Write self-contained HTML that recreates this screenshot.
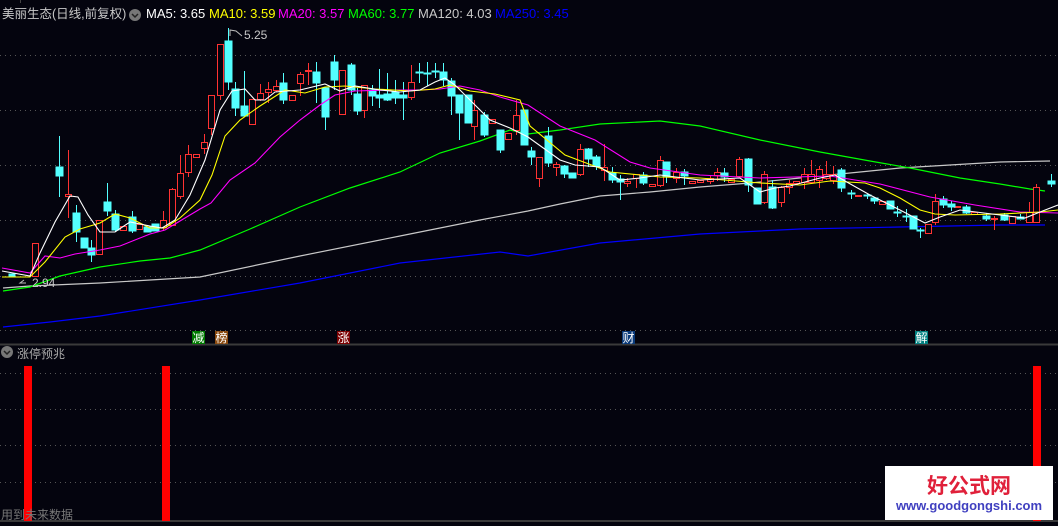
<!DOCTYPE html>
<html><head><meta charset="utf-8"><style>
html,body{margin:0;padding:0;background:#04040e;}
body{width:1058px;height:526px;overflow:hidden;position:relative;font-family:"Liberation Sans","Noto Sans CJK SC",sans-serif;}
.hd{position:absolute;top:6px;font-size:13px;color:#c8c8c8;white-space:nowrap;line-height:16px}
.sig{position:absolute;top:331px;width:13px;height:13px;font-size:12px;line-height:13px;color:#fff;text-align:center;font-family:"Noto Sans CJK SC",sans-serif}
.logo{position:absolute;left:885px;top:466px;width:168px;height:54px;background:#fff;text-align:center}
</style></head><body>
<svg width="1058" height="526" style="position:absolute;left:0;top:0">
<g stroke="#555" stroke-width="1" stroke-dasharray="1,4">
<line x1="0" y1="55.5" x2="1058" y2="55.5"/><line x1="0" y1="110.5" x2="1058" y2="110.5"/><line x1="0" y1="165.5" x2="1058" y2="165.5"/><line x1="0" y1="220.5" x2="1058" y2="220.5"/><line x1="0" y1="276.5" x2="1058" y2="276.5"/><line x1="0" y1="330.5" x2="1058" y2="330.5"/>
<line x1="0" y1="373.5" x2="1058" y2="373.5"/><line x1="0" y1="409.5" x2="1058" y2="409.5"/><line x1="0" y1="445.5" x2="1058" y2="445.5"/><line x1="0" y1="482.5" x2="1058" y2="482.5"/>
</g>
<line x1="0" y1="344.5" x2="1058" y2="344.5" stroke="#3a3a3a" stroke-width="2"/>
<line x1="0" y1="521" x2="1058" y2="521" stroke="#3a3a3a" stroke-width="2"/>
<g fill="none" stroke-width="1.2">
<polyline stroke="#0000ff" points="3,327 50,322 100,316 200,300 300,283 400,263 500,252 528,256 600,243 700,234 800,229 900,227 1000,225 1045,225"/>
<polyline stroke="#c8c8c8" points="3,288 30,286 100,283 150,280 200,277 300,256 400,236 480,220 528,211 560,204 600,196 650,192 700,187 750,183 800,178 850,173 900,168 950,165 1000,162 1050,161"/>
<polyline stroke="#00ff00" points="3,291 30,287 60,276 100,267 140,261 170,258 200,250 250,229 300,207 350,188 400,172 440,153 480,141 510,130 528,134 560,130 600,124 660,121 700,126 760,140 820,152 870,161 910,168 960,178 1000,184 1030,189 1045,191"/>
</g>
<g stroke="#ff3232" stroke-width="1">
<g fill="#04040e">
<line x1="35.5" y1="243" x2="35.5" y2="277"/><rect x="32.5" y="243.5" width="6" height="33"/>
<line x1="68.5" y1="150" x2="68.5" y2="218"/><rect x="65.5" y="194.5" width="6" height="2"/>
<rect x="96.5" y="220.5" width="6" height="34"/>
<rect x="120.5" y="226.5" width="6" height="4"/><rect x="136.5" y="224.5" width="6" height="5"/>
<line x1="163.5" y1="211" x2="163.5" y2="231"/><rect x="160.5" y="220.5" width="6" height="7"/>
<line x1="172.5" y1="188" x2="172.5" y2="226"/><rect x="169.5" y="189.5" width="6" height="36"/>
<line x1="180.5" y1="155" x2="180.5" y2="199"/><rect x="177.5" y="173.5" width="6" height="23"/>
<line x1="188.5" y1="145" x2="188.5" y2="177"/><rect x="185.5" y="154.5" width="6" height="18"/>
<rect x="193.5" y="154.5" width="6" height="3"/>
<line x1="204.5" y1="134" x2="204.5" y2="154"/><rect x="201.5" y="142.5" width="6" height="6"/>
<line x1="211.5" y1="95" x2="211.5" y2="135"/><rect x="208.5" y="95.5" width="6" height="33"/>
<line x1="220.5" y1="44" x2="220.5" y2="100"/><rect x="217.5" y="44.5" width="6" height="51"/>
<rect x="249.5" y="99.5" width="6" height="25"/>
<line x1="260.5" y1="84" x2="260.5" y2="101"/><rect x="257.5" y="93.5" width="6" height="6"/>
<line x1="268.5" y1="82" x2="268.5" y2="103"/><rect x="265.5" y="89.5" width="6" height="3"/>
<line x1="276.5" y1="80" x2="276.5" y2="92"/><rect x="273.5" y="86.5" width="6" height="4"/>
<rect x="289.5" y="95.5" width="6" height="5"/>
<line x1="300.5" y1="72" x2="300.5" y2="96"/><rect x="297.5" y="74.5" width="6" height="9"/>
<line x1="308.5" y1="63" x2="308.5" y2="85"/><rect x="305.5" y="70.5" width="6" height="1"/>
<rect x="339.5" y="70.5" width="6" height="44"/>
<line x1="364.5" y1="85" x2="364.5" y2="118"/><rect x="361.5" y="85.5" width="6" height="25"/>
<line x1="411.5" y1="65" x2="411.5" y2="100"/><rect x="408.5" y="82.5" width="6" height="15"/>
<line x1="474.5" y1="100" x2="474.5" y2="140"/><rect x="471.5" y="110.5" width="6" height="16"/>
<rect x="489.5" y="119.5" width="6" height="4"/><rect x="505.5" y="133.5" width="6" height="6"/>
<line x1="516.5" y1="100" x2="516.5" y2="135"/><rect x="513.5" y="115.5" width="6" height="15"/>
<line x1="539.5" y1="157" x2="539.5" y2="187"/><rect x="536.5" y="157.5" width="6" height="21"/>
<line x1="556.5" y1="162" x2="556.5" y2="176"/><rect x="553.5" y="164.5" width="6" height="3"/>
<line x1="580.5" y1="144" x2="580.5" y2="176"/><rect x="577.5" y="149.5" width="6" height="25"/>
<line x1="604.5" y1="144" x2="604.5" y2="181"/><rect x="601.5" y="167.5" width="6" height="3"/>
<line x1="627.5" y1="178" x2="627.5" y2="187"/><rect x="624.5" y="181.5" width="6" height="2"/>
<line x1="636.5" y1="174" x2="636.5" y2="188"/><rect x="633.5" y="174.5" width="6" height="4"/>
<rect x="649.5" y="184.5" width="6" height="2"/>
<line x1="660.5" y1="156" x2="660.5" y2="187"/><rect x="657.5" y="160.5" width="6" height="25"/>
<line x1="676.5" y1="168" x2="676.5" y2="183"/><rect x="673.5" y="172.5" width="6" height="6"/>
<rect x="689.5" y="181.5" width="6" height="2"/><rect x="697.5" y="180.5" width="6" height="2"/>
<line x1="710.5" y1="176" x2="710.5" y2="184"/><rect x="707.5" y="178.5" width="6" height="3"/>
<line x1="717.5" y1="168" x2="717.5" y2="181"/><rect x="714.5" y="172.5" width="6" height="3"/>
<rect x="728.5" y="179.5" width="6" height="3"/>
<line x1="739.5" y1="157" x2="739.5" y2="177"/><rect x="736.5" y="159.5" width="6" height="17"/>
<line x1="764.5" y1="171" x2="764.5" y2="204"/><rect x="761.5" y="174.5" width="6" height="28"/>
<line x1="781.5" y1="186" x2="781.5" y2="207"/><rect x="778.5" y="187.5" width="6" height="15"/>
<line x1="789.5" y1="180" x2="789.5" y2="194"/><rect x="786.5" y="183.5" width="6" height="4"/>
<rect x="793.5" y="181.5" width="6" height="2"/>
<line x1="804.5" y1="168" x2="804.5" y2="189"/><rect x="801.5" y="174.5" width="6" height="8"/>
<line x1="811.5" y1="160" x2="811.5" y2="181"/><rect x="808.5" y="174.5" width="6" height="8"/>
<line x1="819.5" y1="166" x2="819.5" y2="188"/><rect x="816.5" y="169.5" width="6" height="11"/>
<line x1="826.5" y1="161" x2="826.5" y2="180"/><rect x="823.5" y="174.5" width="6" height="4"/>
<line x1="833.5" y1="166" x2="833.5" y2="184"/><rect x="830.5" y="174.5" width="6" height="6"/>
<rect x="855.5" y="195.5" width="6" height="1"/><rect x="879.5" y="201.5" width="6" height="3"/>
<rect x="925.5" y="224.5" width="6" height="9"/>
<line x1="935.5" y1="194" x2="935.5" y2="225"/><rect x="932.5" y="201.5" width="6" height="21"/>
<rect x="954.5" y="206.5" width="6" height="1"/><rect x="971.5" y="212.5" width="6" height="2"/>
<line x1="994.5" y1="216" x2="994.5" y2="230"/><rect x="991.5" y="218.5" width="6" height="1"/>
<rect x="1009.5" y="216.5" width="6" height="7"/>
<line x1="1029.5" y1="202" x2="1029.5" y2="223"/><rect x="1026.5" y="212.5" width="6" height="10"/>
<line x1="1036.5" y1="184" x2="1036.5" y2="222"/><rect x="1033.5" y="187.5" width="6" height="35"/>
</g></g>
<g stroke="#54ffff" fill="#54ffff" stroke-width="1">
<rect x="9" y="274" width="6" height="3"/>
<line x1="59.5" y1="136" x2="59.5" y2="197"/><rect x="56" y="167" width="7" height="9"/>
<line x1="76.5" y1="205" x2="76.5" y2="242"/><rect x="73" y="213" width="7" height="19"/>
<rect x="81" y="238" width="7" height="10"/>
<line x1="91.5" y1="240" x2="91.5" y2="262"/><rect x="88" y="248" width="7" height="7"/>
<line x1="107.5" y1="183" x2="107.5" y2="216"/><rect x="104" y="202" width="7" height="9"/>
<line x1="115.5" y1="210" x2="115.5" y2="232"/><rect x="112" y="214" width="7" height="16"/>
<line x1="132.5" y1="211" x2="132.5" y2="233"/><rect x="129" y="217" width="7" height="14"/>
<rect x="144" y="227" width="7" height="5"/><rect x="152" y="224" width="7" height="7"/>
<line x1="228.5" y1="28" x2="228.5" y2="90"/><rect x="225" y="41" width="7" height="41"/>
<line x1="235.5" y1="82" x2="235.5" y2="116"/><rect x="232" y="89" width="7" height="19"/>
<line x1="244.5" y1="71" x2="244.5" y2="116"/><rect x="241" y="106" width="7" height="10"/>
<line x1="283.5" y1="73" x2="283.5" y2="104"/><rect x="280" y="83" width="7" height="17"/>
<line x1="316.5" y1="62" x2="316.5" y2="103"/><rect x="313" y="72" width="7" height="11"/>
<line x1="325.5" y1="88" x2="325.5" y2="130"/><rect x="322" y="88" width="7" height="29"/>
<line x1="334.5" y1="55" x2="334.5" y2="90"/><rect x="331" y="62" width="7" height="18"/>
<line x1="351.5" y1="63" x2="351.5" y2="95"/><rect x="348" y="65" width="7" height="25"/>
<line x1="357.5" y1="88" x2="357.5" y2="115"/><rect x="354" y="94" width="7" height="17"/>
<line x1="372.5" y1="85" x2="372.5" y2="106"/><rect x="369" y="90" width="7" height="6"/>
<line x1="379.5" y1="69" x2="379.5" y2="108"/><rect x="376" y="95" width="7" height="3"/>
<line x1="387.5" y1="73" x2="387.5" y2="101"/><rect x="384" y="94" width="7" height="6"/>
<line x1="395.5" y1="80" x2="395.5" y2="104"/><rect x="392" y="92" width="7" height="6"/>
<line x1="403.5" y1="82" x2="403.5" y2="120"/><rect x="400" y="95" width="7" height="3"/>
<line x1="419.5" y1="63" x2="419.5" y2="83"/><rect x="416" y="72" width="7" height="1"/>
<line x1="427.5" y1="62" x2="427.5" y2="86"/><rect x="424" y="73" width="7" height="1"/>
<line x1="435.5" y1="63" x2="435.5" y2="78"/><rect x="432" y="71" width="7" height="1"/>
<line x1="443.5" y1="63" x2="443.5" y2="86"/><rect x="440" y="72" width="7" height="8"/>
<line x1="451.5" y1="78" x2="451.5" y2="115"/><rect x="448" y="81" width="7" height="15"/>
<line x1="459.5" y1="95" x2="459.5" y2="140"/><rect x="456" y="95" width="7" height="18"/>
<rect x="465" y="95" width="7" height="28"/>
<line x1="484.5" y1="112" x2="484.5" y2="137"/><rect x="481" y="115" width="7" height="20"/>
<line x1="500.5" y1="130" x2="500.5" y2="153"/><rect x="497" y="130" width="7" height="20"/>
<rect x="521" y="110" width="7" height="35"/>
<line x1="531.5" y1="147" x2="531.5" y2="165"/><rect x="528" y="151" width="7" height="6"/>
<line x1="548.5" y1="127" x2="548.5" y2="167"/><rect x="545" y="136" width="7" height="27"/>
<line x1="564.5" y1="165" x2="564.5" y2="178"/><rect x="561" y="166" width="7" height="8"/>
<rect x="569" y="173" width="7" height="5"/>
<line x1="588.5" y1="148" x2="588.5" y2="167"/><rect x="585" y="149" width="7" height="10"/>
<line x1="596.5" y1="155" x2="596.5" y2="170"/><rect x="593" y="157" width="7" height="9"/>
<line x1="612.5" y1="167" x2="612.5" y2="183"/><rect x="609" y="173" width="7" height="7"/>
<line x1="620.5" y1="175" x2="620.5" y2="200"/><rect x="617" y="179" width="7" height="3"/>
<line x1="643.5" y1="172" x2="643.5" y2="185"/><rect x="640" y="175" width="7" height="8"/>
<line x1="666.5" y1="162" x2="666.5" y2="183"/><rect x="663" y="162" width="7" height="15"/>
<line x1="684.5" y1="169" x2="684.5" y2="185"/><rect x="681" y="172" width="7" height="4"/>
<line x1="724.5" y1="168" x2="724.5" y2="182"/><rect x="721" y="173" width="7" height="4"/>
<line x1="748.5" y1="158" x2="748.5" y2="192"/><rect x="745" y="159" width="7" height="26"/>
<rect x="754" y="188" width="7" height="16"/>
<line x1="772.5" y1="180" x2="772.5" y2="209"/><rect x="769" y="187" width="7" height="21"/>
<line x1="841.5" y1="168" x2="841.5" y2="192"/><rect x="838" y="170" width="7" height="18"/>
<line x1="851.5" y1="190" x2="851.5" y2="199"/><rect x="848" y="193" width="7" height="1"/>
<line x1="867.5" y1="194" x2="867.5" y2="199"/><rect x="864" y="195" width="7" height="1"/>
<line x1="874.5" y1="198" x2="874.5" y2="204"/><rect x="871" y="198" width="7" height="3"/>
<rect x="887" y="201" width="7" height="8"/>
<line x1="897.5" y1="206" x2="897.5" y2="217"/><rect x="894" y="212" width="7" height="1"/>
<line x1="906.5" y1="209" x2="906.5" y2="222"/><rect x="903" y="216" width="7" height="1"/>
<rect x="910" y="216" width="7" height="13"/>
<line x1="920.5" y1="228" x2="920.5" y2="238"/><rect x="917" y="230" width="7" height="1"/>
<line x1="943.5" y1="196" x2="943.5" y2="208"/><rect x="940" y="199" width="7" height="6"/>
<line x1="951.5" y1="201" x2="951.5" y2="211"/><rect x="948" y="204" width="7" height="3"/>
<line x1="966.5" y1="205" x2="966.5" y2="214"/><rect x="963" y="207" width="7" height="6"/>
<line x1="986.5" y1="213" x2="986.5" y2="221"/><rect x="983" y="216" width="7" height="3"/>
<line x1="1004.5" y1="213" x2="1004.5" y2="221"/><rect x="1001" y="215" width="7" height="5"/>
<line x1="1020.5" y1="214" x2="1020.5" y2="219"/><rect x="1017" y="217" width="7" height="2"/>
<line x1="1051.5" y1="174" x2="1051.5" y2="187"/><rect x="1048" y="181" width="7" height="3"/>
</g>
<g fill="none" stroke-width="1.1">
<polyline stroke="#ff00ff" points="2,268 30,273 45,256 60,258 75,254 100,250 120,246 150,234 165,230 180,221 200,209 211,203 230,180 255,163 280,137 300,120 320,105 335,95 355,91 390,90 420,90 440,89 460,86 480,90 500,97 528,105 560,126 595,140 630,162 650,168 700,175 760,178 830,176 880,184 930,197 975,205 1020,212 1058,213"/>
<polyline stroke="#ffff00" points="2,277 30,277 45,262 65,237 80,229 100,223 115,214 130,218 150,228 165,228 180,218 200,200 212,175 225,136 240,120 260,106 285,90 305,93 325,87 345,86 375,89 410,91 435,89 450,85 470,91 495,94 520,100 530,126 565,155 610,172 660,177 700,178 760,183 800,185 830,181 865,183 880,188 900,198 920,210 935,214 955,215 1000,214 1040,212 1058,210"/>
<polyline stroke="#ffffff" points="2,271 30,276 40,253 55,222 70,196 78,197 88,215 100,232 115,232 130,222 150,226 162,228 175,220 190,195 205,160 220,110 232,91 245,89 255,100 265,100 275,92 300,90 325,84 340,91 355,86 380,90 400,92 420,90 435,82 445,78 455,85 470,100 490,120 510,128 528,137 560,160 575,165 600,167 620,180 640,178 660,175 700,180 740,178 760,192 775,188 790,186 820,178 835,175 845,181 870,195 900,210 925,223 940,217 960,210 1000,215 1025,218 1040,212 1058,205"/>
</g>
<polyline points="230,36 230,30 236,31 242,36" fill="none" stroke="#bbb"/>
<text x="244" y="39" fill="#c8c8c8" font-size="12" font-family="Liberation Sans">5.25</text>
<polyline points="26,283 20,283 24,280" fill="none" stroke="#bbb"/>
<text x="32" y="287" fill="#c8c8c8" font-size="12" font-family="Liberation Sans">2.94</text>
<g fill="#ff0000">
<rect x="24" y="366" width="8" height="155"/><rect x="162" y="366" width="8" height="155"/><rect x="1033" y="366" width="8" height="155"/>
</g>
<line x1="20.5" y1="0" x2="20.5" y2="3" stroke="#444"/>
<circle cx="135" cy="15" r="6" fill="#777"/><polyline points="132,14 135,17 138,14" fill="none" stroke="#222" stroke-width="1.5"/>
<circle cx="7" cy="352" r="6" fill="#777"/><polyline points="4,351 7,354 10,351" fill="none" stroke="#222" stroke-width="1.5"/>
</svg>
<div class="hd" style="left:2px;font-size:12.5px">美丽生态(日线,前复权)</div>
<div class="hd" style="left:146px;color:#fff">MA5: 3.65</div>
<div class="hd" style="left:209px;color:#ffff00">MA10: 3.59</div>
<div class="hd" style="left:278px;color:#ff00ff">MA20: 3.57</div>
<div class="hd" style="left:348px;color:#00ff00">MA60: 3.77</div>
<div class="hd" style="left:418px;color:#c8c8c8">MA120: 4.03</div>
<div class="hd" style="left:495px;color:#0000ff">MA250: 3.45</div>
<div style="position:absolute;left:17px;top:345px;font-size:12px;color:#aaa">涨停预兆</div>
<div style="position:absolute;left:1px;top:506px;font-size:12px;color:#777">用到未来数据</div>
<div class="sig" style="left:192px;background:#007a00">减</div>
<div class="sig" style="left:215px;background:#8a4a10">榜</div>
<div class="sig" style="left:337px;background:#7a0000">涨</div>
<div class="sig" style="left:622px;background:#0a3a7a">财</div>
<div class="sig" style="left:915px;background:#008080">解</div>
<div class="logo"><div style="font-family:'Noto Sans CJK SC',sans-serif;font-weight:bold;font-size:21px;color:#e0203a;line-height:26px;margin-top:6px">好公式网</div><div style="font-family:'Liberation Sans',sans-serif;font-weight:bold;font-size:13px;color:#4040c0;line-height:16px">www.goodgongshi.com</div></div>
</body></html>
